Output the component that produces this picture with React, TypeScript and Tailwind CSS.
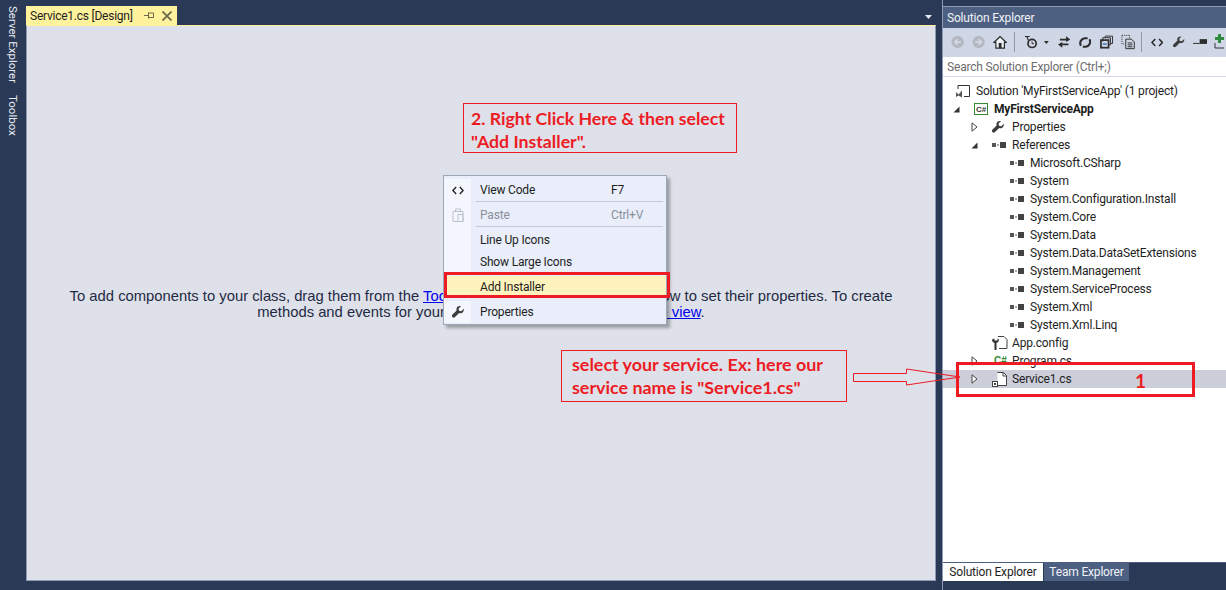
import React from 'react';

const refs = [
  'Microsoft.CSharp',
  'System',
  'System.Configuration.Install',
  'System.Core',
  'System.Data',
  'System.Data.DataSetExtensions',
  'System.Management',
  'System.ServiceProcess',
  'System.Xml',
  'System.Xml.Linq',
];

function Wrench({className}: {className?: string}) {
  return (
    <svg viewBox="0 0 12 12" className={className}>
      <path d="M11.800 2.800 9.300 5.200 7 4.800 6.600 2.600 9 .3C7.200-.3 5.300.5 4.700 2c-.4.9-.3 1.800 0 2.500L.5 8.600c-.7.700-.7 1.800 0 2.500s1.800.7 2.500 0l4.200-4.200c.9.4 1.900.4 2.800 0 1.400-.7 2.100-2.400 1.800-4.100Z" fill="#3c3c3c" />
    </svg>
  );
}

function CodeIcon({className}: {className?: string}) {
  return (
    <svg viewBox="0 0 13 9" className={className} fill="none" stroke="#222" strokeWidth="1.500">
      <path d="M4.500.8 1 4.500l3.500 3.700M8.500.8 12 4.500 8.500 8.200" />
    </svg>
  );
}

function RefIcon() {
  return (
    <svg width="16" height="8" viewBox="0 0 16 8" className="shrink-0">
      <rect x="0" y="2" width="4" height="4" fill="#555" />
      <rect x="5" y="3.500" width="2" height="1" fill="#555" />
      <rect x="8" y="1" width="6" height="6" fill="#424242" />
    </svg>
  );
}

function Open() {
  return (
    <svg width="7" height="7" viewBox="0 0 7 7" className="shrink-0">
      <path d="M6.500.5v6h-6Z" fill="#333" />
    </svg>
  );
}

function Closed() {
  return (
    <svg width="7" height="10" viewBox="0 0 7 10" className="shrink-0">
      <path d="M1 .8 6 5 1 9.200Z" fill="#fff" stroke="#444" />
    </svg>
  );
}

function FileIcon() {
  return (
    <svg width="16" height="16" viewBox="0 0 16 16" className="shrink-0">
      <path d="M5.500 1.500h6l3 3v10h-9" fill="#fff" stroke="#424242" />
      <path d="M11 1.500v3.500h3.500" fill="none" stroke="#424242" />
      <rect x=".5" y="10.500" width="5" height="5" fill="#fff" stroke="#424242" />
      <rect x="2" y="12" width="2" height="2" fill="#424242" />
    </svg>
  );
}

function Row({indent, arrow, icon, children, bold, selected}: {indent: string; arrow?: React.ReactNode; icon: React.ReactNode; children: React.ReactNode; bold?: boolean; selected?: boolean}) {
  return (
    <div className={`flex h-[18px] items-center ${selected ? 'bg-[#ccceda]' : ''}`}>
      <div className={`flex items-center ${indent}`}>
        <div className="flex w-[21px] shrink-0 items-center">{arrow}</div>
        <div className="flex w-[20px] shrink-0 items-center">{icon}</div>
      </div>
      <span className={`whitespace-nowrap text-[12px] tracking-[-0.015em] text-[#1e1e1e] ${bold ? 'font-bold' : ''}`}>{children}</span>
    </div>
  );
}

function ToolbarIcons() {
  return (
    <div className="flex h-[28px] items-center pl-[8px]">
      <svg width="14" height="14" viewBox="0 0 14 14"><circle cx="7" cy="7" r="6.500" fill="#b4b8c0" /><path d="M10.500 7h-6M7 4 4 7l3 3" fill="none" stroke="#d6dbe6" strokeWidth="1.500" /></svg>
      <svg width="14" height="14" viewBox="0 0 14 14" className="ml-[8px]"><circle cx="7" cy="7" r="6.500" fill="#b4b8c0" /><path d="M3.500 7h6M7 4l3 3-3 3" fill="none" stroke="#d6dbe6" strokeWidth="1.500" /></svg>
      <svg width="15" height="14" viewBox="0 0 15 14" className="ml-[7px]"><path d="M7.500 1.200 1 7.500h2v6h9v-6h2Z" fill="#eef1f7" stroke="#2c2c2c" strokeWidth="1.300" /><rect x="6" y="8" width="3" height="5.500" fill="#2c2c2c" /></svg>
      <div className="ml-[7px] h-[20px] w-px bg-[#8f98aa]" />
      <svg width="16" height="14" viewBox="0 0 16 14" className="ml-[9px]" fill="none" stroke="#2c2c2c"><circle cx="8.500" cy="8.500" r="4.300" strokeWidth="1.800" /><path d="M8.500 6.500v2.200h2" /><path d="M1 1.200h5M3 1.200l1.500 4" strokeWidth="1.200" /></svg>
      <svg width="5" height="3" viewBox="0 0 5 3" className="ml-[5px]"><path d="M0 0h5L2.500 3Z" fill="#2c2c2c" /></svg>
      <svg width="13" height="12" viewBox="0 0 13 12" className="ml-[9px]" fill="#2c2c2c"><path d="M2 2.500h6.500V0L13 3.500 8.500 6V4.500H2Z" /><path d="M11 7.500H4.500V6L0 8.500 4.500 12V9.500H11Z" /></svg>
      <svg width="13" height="13" viewBox="0 0 13 13" className="ml-[9px]" fill="none" stroke="#2c2c2c" strokeWidth="2.200"><path d="M2 10c-1.800-3.500 0-7.500 4-8h3" /><path d="M11 3c1.800 3.500 0 7.500-4 8H4" /></svg>
      <svg width="14" height="14" viewBox="0 0 14 14" className="ml-[9px]" fill="none" stroke="#2c2c2c"><rect x="1" y="5" width="8" height="8" strokeWidth="1.800" /><path d="M3 6.500V2.500h8v7.500H9.500M5.500 2.500V.8h7.700v7.700h-2" /><rect x="3" y="8.500" width="4" height="1.300" fill="#1b5fa8" stroke="none" /></svg>
      <svg width="15" height="16" viewBox="0 0 15 16" className="ml-[7px]" fill="none" stroke="#2c2c2c"><path d="M1 1h8v3" strokeDasharray="1 1" /><path d="M1 1v9h3" strokeDasharray="1 1" /><path d="M5 5h6l3 3v7H5Z" /><path d="M7 9h5M7 11h5M7 13h5" /></svg>
      <div className="ml-[6px] h-[20px] w-px bg-[#8f98aa]" />
      <CodeIcon className="ml-[9px] h-[9px] w-[13px]" />
      <Wrench className="ml-[10px] h-[12px] w-[12px]" />
      <svg width="15" height="6" viewBox="0 0 15 6" className="ml-[8px]"><path d="M0 4.500h7" stroke="#2c2c2c" fill="none" /><rect x="7" y="0" width="8" height="5" fill="#2c2c2c" /></svg>
      <svg width="12" height="16" viewBox="0 0 12 16" className="ml-[7px] shrink-0"><path d="M4 0h3v3h3v3H7v3H4V6H1V3h3Z" fill="#2f8a3b" /><path d="M1 9v5h9" fill="none" stroke="#333" /></svg>
    </div>
  );
}

export default function App() {
  return (
    <div className="relative flex h-[590px] w-[1226px] overflow-hidden bg-[#2a3a56] font-['Roboto',sans-serif]">
      {/* Side tool tabs */}
      <div className="flex w-[26px] shrink-0 flex-col items-center pt-[6px]">
        <span className="text-[11.5px] leading-[16px] text-[#e8ebf1] [writing-mode:vertical-rl]">Server Explorer</span>
        <span className="mt-[12px] text-[11.5px] leading-[16px] text-[#e8ebf1] [writing-mode:vertical-rl]">Toolbox</span>
      </div>

      {/* Designer */}
      <div className="flex w-[910px] shrink-0 flex-col pt-[6px] pb-[9px]">
        <div className="flex h-[19px] shrink-0 items-start justify-between">
          <div className="flex h-[19px] w-[151px] items-center bg-[#fff29d] pl-[4px]">
            <span className="w-[104px] whitespace-nowrap text-[12px] tracking-[-0.02em] text-[#1e1e1e]">Service1.cs [Design]</span>
            <svg width="10" height="9" viewBox="0 0 10 9" className="ml-[10px]" fill="none" stroke="#6d6a4a"><path d="M0 4.500h4M4.500 1.500v6M4.500 2h5v4.500h-5" /></svg>
            <svg width="10" height="10" viewBox="0 0 10 10" className="ml-[8px]" fill="none" stroke="#6d6a4a" strokeWidth="1.800"><path d="M.5.5l9 9M9.500.5l-9 9" /></svg>
          </div>
          <svg width="7" height="4" viewBox="0 0 7 4" className="mt-[9px] mr-[4px]"><path d="M0 0h7L3.500 4Z" fill="#e8ebf1" /></svg>
        </div>
        <div className="flex flex-1 flex-col items-center justify-center border border-t-[#fff29d] border-r-[#8d9ab3] border-b-[#8d9ab3] border-l-[#8d9ab3] bg-[#dee1e9] pt-[2px]">
          <p className="w-[840px] text-center font-['Liberation_Sans',sans-serif] text-[14.8px] leading-[16px] text-[#1e2a44]">
            To add components to your class, drag them from the <span className="text-[#0000ee] underline">Toolbox</span> and use the Properties window to set their properties. To create methods and events for your class, click here to <span className="text-[#0000ee] underline">switch to code view</span>.
          </p>
        </div>
      </div>

      {/* Solution Explorer */}
      <div className="ml-[6px] flex w-[284px] shrink-0 flex-col border-l border-[#8d9ab3] pt-[6px] pb-[9px]">
        <div className="flex h-[22px] shrink-0 items-center border-t border-[#8d9ab3] bg-[#4d6082] pl-[4px] text-[12px] tracking-[-0.015em] text-[#f0f2f6]">Solution Explorer</div>
        <div className="shrink-0 bg-[#cfd6e5]">
          <ToolbarIcons />
          <div className="flex h-[21px] items-center border-y border-[#cfd6e5] bg-white pl-[4px] text-[12px] tracking-[-0.015em] text-[#6d6d6d]">Search Solution Explorer (Ctrl+;)</div>
        </div>
        <div className="flex-1 bg-white pt-[5px]">
          <div className="flex h-[18px] items-center pl-[12px]">
            <svg width="16" height="14" viewBox="0 0 16 14" className="mr-[5px] shrink-0" fill="none" stroke="#333"><path d="M3 5V1.500h11.500v11H9" /><path d="M1 8l2.500 2.500L7 6.500v7l-3.500-2L1 13Z" fill="#555" stroke="none" /></svg>
            <span className="whitespace-nowrap text-[12px] tracking-[-0.015em] text-[#1e1e1e]">Solution 'MyFirstServiceApp' (1 project)</span>
          </div>
          <Row indent="pl-[10px]" arrow={<Open />} icon={<svg width="14" height="12" viewBox="0 0 14 12"><rect x=".5" y=".5" width="13" height="11" fill="#fff" stroke="#388a34" /><text x="2" y="9" fontSize="8" fontWeight="700" fill="#333" fontFamily="Liberation Sans">C#</text></svg>} bold>MyFirstServiceApp</Row>
          <Row indent="pl-[28px]" arrow={<Closed />} icon={<Wrench className="h-[12px] w-[12px]" />}>Properties</Row>
          <Row indent="pl-[28px]" arrow={<Open />} icon={<RefIcon />}>References</Row>
          {refs.map((name) => (
            <Row key={name} indent="pl-[46px]" icon={<RefIcon />}>{name}</Row>
          ))}
          <Row indent="pl-[28px]" icon={<svg width="16" height="14" viewBox="0 0 16 14"><path d="M6 .5h6l3 3v9H7" fill="#fff" stroke="#424242" /><path d="M0 3.500c0 2 1 3 2.500 3.500v7h2V7C6 6.500 7 5.500 7 3.500L5.500 2.500v2h-3v-2Z" fill="#333" /></svg>}>App.config</Row>
          <Row indent="pl-[28px]" arrow={<Closed />} icon={<span className="pl-[2px] font-['Liberation_Sans',sans-serif] text-[10px] leading-none font-bold text-[#388a34]">C#</span>}>Program.cs</Row>
          <Row indent="pl-[28px]" arrow={<Closed />} icon={<FileIcon />} selected>Service1.cs</Row>
        </div>
        <div className="flex h-[19px] shrink-0 border-t border-[#4d6082] text-[12px] tracking-[-0.015em]">
          <div className="flex w-[100px] items-center justify-center bg-white text-[#1e1e1e]">Solution Explorer</div>
          <div className="ml-px flex w-[85px] items-center justify-center bg-[#4d6082] text-[#f0f2f6]">Team Explorer</div>
        </div>
      </div>

      {/* Context menu */}
      <div className="absolute top-[175px] left-[443px] flex w-[224px] flex-col border border-[#9ba7b7] bg-[#e9eefa] pt-[3px] pb-px text-[12px] tracking-[-0.015em] text-[#1e1e1e] shadow-[3px_3px_3px_rgba(0,0,0,0.3)]">
        <div className="flex h-[22px] items-center">
          <div className="flex h-full w-[27px] items-center justify-center bg-[#f3f6fd]"><CodeIcon className="h-[9px] w-[12px]" /></div>
          <span className="ml-[9px] w-[131px]">View Code</span>
          <span>F7</span>
        </div>
        <div className="flex h-[3px]"><div className="w-[27px] bg-[#f3f6fd]" /><div className="ml-[5px] h-px w-[187px] bg-[#c5cad6]" /></div>
        <div className="flex h-[22px] items-center text-[#8a8f9a]">
          <div className="flex h-full w-[27px] items-center justify-center bg-[#f3f6fd]">
            <svg width="12" height="14" viewBox="0 0 12 14" fill="none" stroke="#bcc1cc"><path d="M1 3.500h10v10H1ZM6 6.500h5v7H6ZM3.500 3.500V1h5v2.500" /></svg>
          </div>
          <span className="ml-[9px] w-[131px]">Paste</span>
          <span>Ctrl+V</span>
        </div>
        <div className="flex h-[3px]"><div className="w-[27px] bg-[#f3f6fd]" /><div className="ml-[5px] h-px w-[187px] bg-[#c5cad6]" /></div>
        <div className="flex h-[22px] items-center">
          <div className="h-full w-[27px] bg-[#f3f6fd]" /><span className="ml-[9px]">Line Up Icons</span>
        </div>
        <div className="flex h-[22px] items-center">
          <div className="h-full w-[27px] bg-[#f3f6fd]" /><span className="ml-[9px]">Show Large Icons</span>
        </div>
        <div className="mt-[3px] flex h-[22px] items-center bg-[#fef3bc]">
          <span className="ml-[36px]">Add Installer</span>
        </div>
        <div className="mt-[3px] flex h-[22px] items-center">
          <div className="flex h-full w-[27px] items-center justify-center bg-[#f3f6fd]"><Wrench className="h-[12px] w-[12px]" /></div>
          <span className="ml-[9px]">Properties</span>
        </div>
      </div>

      {/* Red annotations drawn over the screenshot */}
      <div className="absolute top-[272px] left-[444px] h-[26px] w-[226px] border-[3px] border-[#ed1c24]" />
      <div className="absolute top-[103px] left-[463px] h-[50px] w-[274px] border border-[#ed1c24] pt-[3px] pl-[7px] font-['Lato',sans-serif] text-[17.7px] leading-[23px] font-bold text-[#ed1c24]">
        2. Right Click Here &amp; then select<br />"Add Installer".
      </div>
      <div className="absolute top-[350px] left-[561px] h-[52px] w-[286px] border border-[#ed1c24] pt-[2px] pl-[10px] font-['Lato',sans-serif] text-[17.9px] leading-[23px] font-bold text-[#ed1c24]">
        select your service. Ex: here our<br />service name is "Service1.cs"
      </div>
      <svg className="absolute top-[368px] left-[853px]" width="108" height="18" viewBox="0 0 108 18" fill="none" stroke="#ed1c24">
        <path d="M.5 5.500h53V1L107 9 53.500 17v-3.500H.5Z" />
      </svg>
      <div className="absolute top-[362px] left-[956px] h-[35px] w-[239px] border-[3px] border-[#ed1c24]" />
      <span className="absolute top-[370px] left-[1135px] font-['Lato',sans-serif] text-[19px] leading-[22px] font-bold text-[#ed1c24]">1</span>
    </div>
  );
}
